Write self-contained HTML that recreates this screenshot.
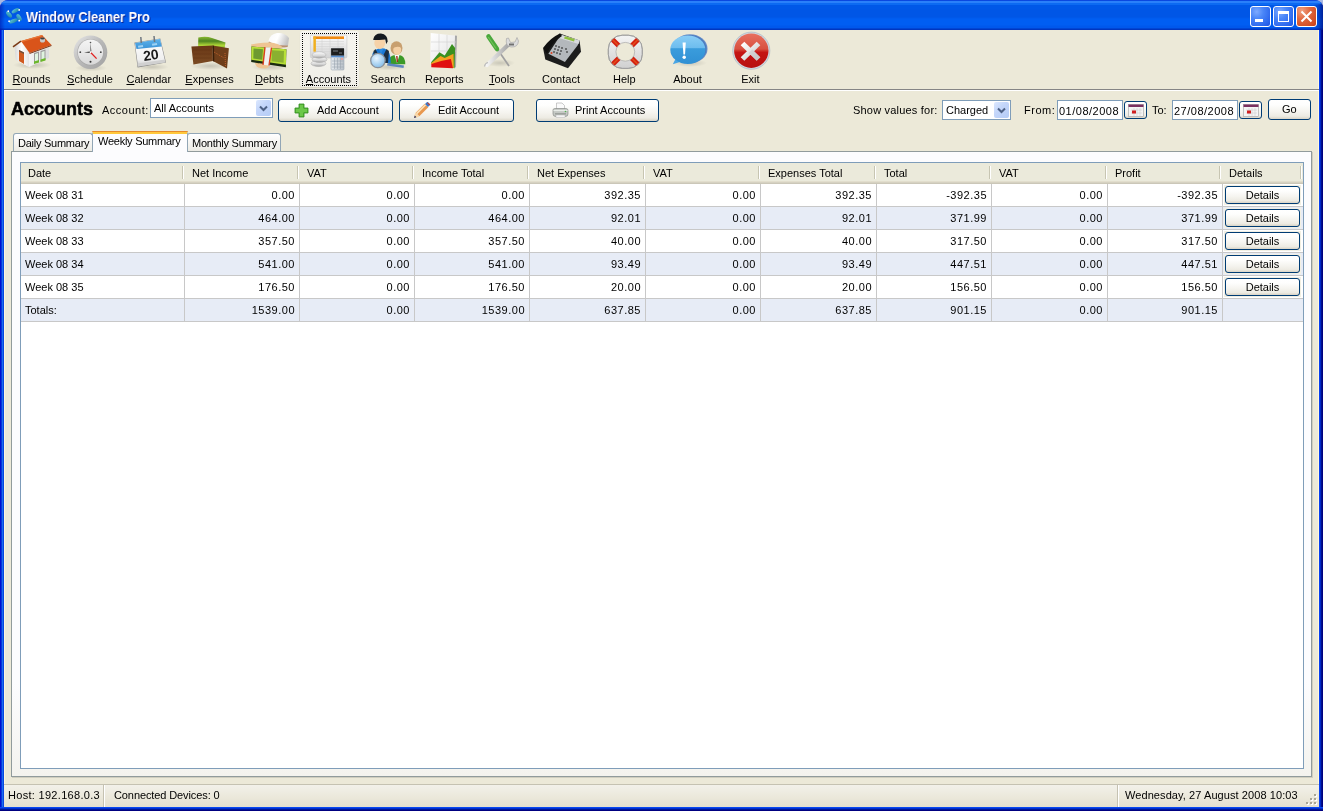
<!DOCTYPE html><html><head><meta charset="utf-8"><style>
*{box-sizing:border-box}
html,body{margin:0;padding:0}
body{width:1323px;height:811px;overflow:hidden;position:relative;background:#A8B8E4;font-family:"Liberation Sans",sans-serif;font-size:11px;color:#000}
.a{position:absolute}
#win{left:0;top:0;width:1323px;height:811px;border-radius:8px 8px 0 0;overflow:hidden;
 background:linear-gradient(to right,#0010D0 0,#0010D0 1px,#0838D8 1px,#0838D8 2px,#1C6CF0 2px,#1C6CF0 3px,#0848E0 3px,#0848E0 1319px,#0840F0 1319px,#0840F0 1320px,#0028C8 1320px,#0028C8 1321px,#00108C 1321px,#00108C 1322px,#000080 1322px)}
#bot{left:0;top:807px;width:1323px;height:4px;background:linear-gradient(to bottom,#0848F0 0,#0848F0 1px,#0030D0 1px,#0030D0 2px,#001898 2px,#001898 3px,#000080 3px,#000080 4px)}
#title{left:0;top:0;width:1323px;height:30px;border-radius:8px 8px 0 0;
 background:linear-gradient(to bottom,#0A48E0 0,#0A48E0 1px,#2A80FA 1px,#2A80FA 3px,#0C6AF2 3px,#0C6AF2 5px,#0058E8 5px,#0058E8 9px,#0056E6 10px,#0056E6 17px,#005EF2 19px,#005EF2 25px,#0058EC 26px,#0058EC 28px,#0046D4 28px,#0046D4 29px,#0036C0 29px,#0036C0 30px)}
#ttext{will-change:transform;left:26px;top:10px;font-size:14px;font-weight:bold;color:#fff;text-shadow:1px 1px 0 #0A1E8C;letter-spacing:0;white-space:nowrap;line-height:15px;transform:scaleX(0.91);transform-origin:0 0}
.tb{top:6px;width:21px;height:21px;border:1px solid #fff;border-radius:3px}
.tbb{background:radial-gradient(ellipse at 30% 25%,#7EAAFF 0,#4A86F8 35%,#2A64EC 80%,#1E52E0 100%)}
#client{left:4px;top:30px;width:1315px;height:777px;background:#ECE9D8;overflow:hidden;will-change:transform;box-shadow:inset 1px 0 0 #FCF6E0,inset -1px 0 0 #FFF8DC,inset 0 -1px 0 #FFF8DC}
.t{white-space:nowrap;line-height:13px}
.tl{top:44px;white-space:nowrap;line-height:13px;text-align:center}
.u{text-decoration:underline;text-underline-offset:1px}
.btn{height:23px;border:1px solid #003C74;border-radius:3px;background:linear-gradient(to bottom,#FFFFFF 0,#FEFEFD 25%,#F5F4EF 60%,#EDEBE3 85%,#D9D4C6 100%)}
.combo{height:20px;border:1px solid #7F9DB9;background:#fff}
.dd{width:15px;height:16px;border-radius:2px;background:linear-gradient(135deg,#DCE8FE 0,#C4D6FA 40%,#B4CCF6 100%)}
.hd{top:133px;height:20px;background:#EBEADB}
</style></head><body>
<div id="win" class="a">
<div id="title" class="a"></div>
<div id="bot" class="a"></div>
<div class="a" style="left:1313px;top:4px;width:10px;height:26px;background:linear-gradient(to right,rgba(0,20,140,0) 0,rgba(0,20,140,0.25) 5px,rgba(0,10,120,0.7) 10px)"></div>
<div class="a" style="left:0;top:4px;width:5px;height:26px;background:linear-gradient(to right,rgba(0,10,160,0.5) 0,rgba(0,20,160,0) 5px)"></div>
<svg class="a" style="left:0;top:0" width="26" height="30" viewBox="0 0 26 30">
<defs><linearGradient id="lg1" x1="0" y1="0" x2="1" y2="1"><stop offset="0" stop-color="#60C8E0"/><stop offset="1" stop-color="#1A7C9C"/></linearGradient></defs>
<ellipse cx="9" cy="14.5" rx="3.8" ry="2" transform="rotate(50 9 14.5)" fill="url(#lg1)"/>
<ellipse cx="15.5" cy="10.7" rx="4.2" ry="1.8" transform="rotate(-28 15.5 10.7)" fill="url(#lg1)"/>
<ellipse cx="19" cy="17.5" rx="3.8" ry="2" transform="rotate(58 19 17.5)" fill="url(#lg1)"/>
<ellipse cx="13.5" cy="21" rx="4.5" ry="1.9" transform="rotate(-22 13.5 21)" fill="url(#lg1)"/>
<circle cx="8.3" cy="11.2" r="0.9" fill="#fff"/><circle cx="19.2" cy="9.9" r="0.9" fill="#fff"/><circle cx="9.1" cy="21.2" r="0.9" fill="#fff"/><circle cx="19.2" cy="20.7" r="0.9" fill="#fff"/>
</svg>
<div id="ttext" class="a">Window Cleaner Pro</div>
<div class="a tb tbb" style="left:1250px"><div class="a" style="left:4px;top:12px;width:8px;height:3px;background:#fff"></div></div>
<div class="a tb tbb" style="left:1273px"><div class="a" style="left:4px;top:4px;width:11px;height:11px;border:1px solid #fff;border-top-width:3px"></div></div>
<div class="a tb" style="left:1296px;background:radial-gradient(ellipse at 25% 20%,#F0A080 0,#E06840 40%,#D04A20 85%,#C03A18 100%)"><svg class="a" style="left:3px;top:3px" width="13" height="13"><path d="M1.5 1.5 L11.5 11.5 M11.5 1.5 L1.5 11.5" stroke="#fff" stroke-width="2"/></svg></div>
</div>
<div id="client" class="a">
<div class="a" style="left:0px;top:59px;width:1315px;height:1px;background:#858585"></div>
<div class="a" style="left:0px;top:60px;width:1315px;height:1px;background:#FFFFFF"></div>
<div class="a" style="left:296px;top:1px;width:59px;height:56px;border-radius:3px;background:linear-gradient(#F6F5F0,#EFEEE8);box-shadow:0 1px 1px rgba(0,0,0,0.08)"></div>
<div class="a" style="left:298px;top:3px;width:55px;height:53px;border:1px dotted #000"></div>
<svg class="a" style="left:6px;top:2px" width="44" height="38" viewBox="0 0 44 38">
<defs>
<linearGradient id="hw1" x1="0" y1="0" x2="1" y2="0"><stop offset="0" stop-color="#D8D8D8"/><stop offset="0.5" stop-color="#FFFFFF"/><stop offset="1" stop-color="#E4E4E4"/></linearGradient>
<linearGradient id="hw2" x1="0" y1="0" x2="1" y2="0"><stop offset="0" stop-color="#F4F4F4"/><stop offset="1" stop-color="#DCDCDC"/></linearGradient>
<radialGradient id="hsh" cx="0.5" cy="0.5" r="0.5"><stop offset="0" stop-color="#000" stop-opacity="0.18"/><stop offset="1" stop-color="#000" stop-opacity="0"/></radialGradient>
</defs>
<ellipse cx="22" cy="33" rx="19" ry="4" fill="url(#hsh)"/>
<polygon points="5,15 11,10 19,21 19,35 6,28" fill="url(#hw1)"/>
<polygon points="19,21 39,14 39,26 19,35" fill="url(#hw2)"/>
<polygon points="4.5,15 11,9.5 19,21 19,35 6,28" fill="url(#hw1)"/>
<path d="M3 14.8 L11 9.2" stroke="#7A3A18" stroke-width="1.6"/>
<polygon points="11,9 32,3 41.5,13 19.5,21" fill="#D9541A"/>
<polygon points="19.5,21 41.5,13 41.5,14 19.5,22" fill="#7A3010"/>
<polygon points="11,9 32,3 33,4 12,10" fill="#E87838"/>
<circle cx="32.5" cy="8" r="2.6" fill="#C8C8C8"/><ellipse cx="32.5" cy="6.4" rx="2.3" ry="1" fill="#404040"/>
<polygon points="9,18 14,20.5 14,32 9,29" fill="#D05A20"/>
<polygon points="9,18 14,20.5 14,22 9,19.5" fill="#6A5040"/>
<polygon points="24,21 29,19.5 29,30 24,31.5" fill="#9A9A9A"/><polygon points="25,22 28,21 28,29 25,30" fill="#E0F4E0"/>
<polygon points="30.5,19 35.5,17.5 35.5,28 30.5,29.5" fill="#9A9A9A"/><polygon points="31.5,20 34.5,19 34.5,27 31.5,28" fill="#E0F4E0"/>
<polygon points="24,29.5 29,28 29,30.5 24,32" fill="#6CB82C"/><polygon points="30.5,27.5 35.5,26 35.5,28.5 30.5,30" fill="#6CB82C"/>
</svg>
<svg class="a" style="left:66px;top:2px" width="42" height="40" viewBox="0 0 42 40">
<defs>
<linearGradient id="cr" x1="0" y1="0" x2="1" y2="1"><stop offset="0" stop-color="#E8E8E8"/><stop offset="0.5" stop-color="#B8B8B8"/><stop offset="1" stop-color="#A0A0A0"/></linearGradient>
<linearGradient id="cf" x1="0" y1="0" x2="0" y2="1"><stop offset="0" stop-color="#F4F4F4"/><stop offset="0.5" stop-color="#E8E8E8"/><stop offset="1" stop-color="#D8D8D8"/></linearGradient>
<radialGradient id="csh" cx="0.5" cy="0.5" r="0.5"><stop offset="0" stop-color="#000" stop-opacity="0.15"/><stop offset="1" stop-color="#000" stop-opacity="0"/></radialGradient>
</defs>
<ellipse cx="21" cy="36" rx="16" ry="3.5" fill="url(#csh)"/>
<circle cx="20.5" cy="20.2" r="16.8" fill="url(#cr)"/>
<circle cx="20.5" cy="20.2" r="13.2" fill="#A8A8A8"/>
<circle cx="20.5" cy="20.2" r="12.6" fill="url(#cf)"/>
<circle cx="20.5" cy="10.5" r="0.8" fill="#555"/><circle cx="20.5" cy="29.8" r="1" fill="#333"/><circle cx="10.3" cy="20.2" r="0.9" fill="#444"/><circle cx="30.8" cy="20.2" r="0.9" fill="#444"/>
<path d="M20.5 20.2 L20.5 10 L21.3 19 Z" fill="#333"/>
<path d="M20.5 19.6 L14 20.2 L20.5 20.9Z" fill="#222"/>
<path d="M20.5 20.2 L26.6 26.6" stroke="#E02020" stroke-width="1.3"/>
<circle cx="20.5" cy="20.2" r="0.9" fill="#fff"/>
</svg>
<svg class="a" style="left:124px;top:2px" width="44" height="40" viewBox="0 0 44 40">
<defs>
<linearGradient id="kb" x1="0" y1="0" x2="0" y2="1"><stop offset="0" stop-color="#FFFFFF"/><stop offset="0.75" stop-color="#EFEFEF"/><stop offset="1" stop-color="#C8C8C8"/></linearGradient>
<linearGradient id="kt" x1="0" y1="0" x2="0" y2="1"><stop offset="0" stop-color="#5EB2EA"/><stop offset="1" stop-color="#3A92D6"/></linearGradient>
<radialGradient id="ksh" cx="0.5" cy="0.5" r="0.5"><stop offset="0" stop-color="#000" stop-opacity="0.15"/><stop offset="1" stop-color="#000" stop-opacity="0"/></radialGradient>
</defs>
<ellipse cx="24" cy="35" rx="17" ry="3.5" fill="url(#ksh)"/>
<polygon points="6.4,10.6 32.3,6.4 38,30.6 9.6,35.5" fill="#8A8A8A"/>
<polygon points="7,11 32,7 37.3,30.2 10,34.6" fill="url(#kb)"/>
<polygon points="7,11 32,7 33.8,14.6 8.5,16.9" fill="url(#kt)"/>
<polygon points="9.5,31.5 37,27.5 37.3,30.2 10,34.6" fill="#D0D0D0"/>
<rect x="10" y="13.5" width="5" height="2" fill="#9ED2F4" transform="rotate(-9 12 14)"/><rect x="24" y="11.5" width="5" height="2" fill="#9ED2F4" transform="rotate(-9 26 12)"/>
<path d="M12.8 5 L13.3 11 M26 4 L26.6 10" stroke="#707880" stroke-width="1.5"/>
<text x="22.8" y="28" font-family="Liberation Sans" font-weight="bold" font-size="14" fill="#1A1A1A" text-anchor="middle" transform="rotate(-8 22 22)">20</text>
</svg>
<svg class="a" style="left:182px;top:2px" width="48" height="40" viewBox="0 0 48 40">
<defs>
<linearGradient id="wg" x1="0" y1="0" x2="0" y2="1"><stop offset="0" stop-color="#88B830"/><stop offset="0.35" stop-color="#4E8420"/><stop offset="0.7" stop-color="#B0D838"/><stop offset="1" stop-color="#7AA828"/></linearGradient>
<linearGradient id="wb" x1="0" y1="0" x2="0" y2="1"><stop offset="0" stop-color="#6A3816"/><stop offset="1" stop-color="#7A4A22"/></linearGradient>
<radialGradient id="wsh" cx="0.5" cy="0.5" r="0.5"><stop offset="0" stop-color="#000" stop-opacity="0.16"/><stop offset="1" stop-color="#000" stop-opacity="0"/></radialGradient>
</defs>
<ellipse cx="24" cy="34" rx="20" ry="4" fill="url(#wsh)"/>
<path d="M12.3 5.5 Q20 4 26 6 L39.5 10.4 L38.5 17 L12.1 15.5 Z" fill="url(#wg)"/>
<polygon points="5.4,14.6 26.6,13.5 26.9,29.1 7.4,32.6" fill="url(#wb)"/>
<path d="M7 18 H25 M7 22 H25 M7 26 H25" stroke="#5A2E10" stroke-width="0.6" opacity="0.6"/>
<polygon points="26.6,13.5 42.9,16.3 41,36.5 26.9,29.1" fill="#6E3E1A"/>
<polygon points="26.6,13.5 28,13.8 28.3,29.8 26.9,29.1" fill="#3A1E08"/>
<path d="M28 20 L38 26 M39 21 L39.5 35" stroke="#D06830" stroke-width="0.8" stroke-dasharray="1 1"/>
</svg>
<svg class="a" style="left:242px;top:0px" width="48" height="42" viewBox="0 0 48 42">
<defs>
<linearGradient id="dc" x1="0" y1="0" x2="1" y2="0.3"><stop offset="0" stop-color="#F8F8F8"/><stop offset="0.5" stop-color="#FFFFFF"/><stop offset="1" stop-color="#C4C4C4"/></linearGradient>
<radialGradient id="dsh" cx="0.5" cy="0.5" r="0.5"><stop offset="0" stop-color="#000" stop-opacity="0.15"/><stop offset="1" stop-color="#000" stop-opacity="0"/></radialGradient>
</defs>
<ellipse cx="24" cy="37" rx="19" ry="4" fill="url(#dsh)"/>
<path d="M22.5 11 Q24 4 31 3 Q39 2.5 43 8 L42 16 Q38 19 30 17 Q24 15 22.5 11Z" fill="url(#dc)"/>
<path d="M23 11.5 Q30 16 42 15.5 L41.5 17 Q30 18.5 22.5 13 Z" fill="#B89070"/>
<path d="M5 14.5 Q12 12.5 24 12.5 Q32 13 37 17.5 L30 20 L6 18.5 Z" fill="#EEC492"/>
<path d="M9 33 Q15 31 23 33 Q24 38.5 18 38.5 Q10 38.5 9 33Z" fill="#EEC492"/>
<polygon points="5.4,16.6 40.4,19.2 39.9,37.3 5.2,32.1" fill="#1A2A10"/>
<polygon points="5.4,16.6 40.4,19.2 39.9,34.8 5.2,29.8" fill="#B8E038"/>
<polygon points="7.5,18.5 17,19.2 16.2,29.8 7.3,28.4" fill="#6E9A30"/>
<polygon points="26,20.2 38,21 37.6,32.8 25.6,31.2" fill="#8AB030"/>
<polygon points="19,17.2 25.5,17.6 23,35.5 17,34.8" fill="#F0F0F0"/>
<path d="M19 17.2 L17 34.8 M25.5 17.6 L23 35.5" stroke="#D84020" stroke-width="1.4"/>
</svg>
<svg class="a" style="left:302px;top:2px" width="46" height="40" viewBox="0 0 46 40">
<defs>
<linearGradient id="ag" x1="0" y1="0" x2="0" y2="1"><stop offset="0" stop-color="#FAFAFA"/><stop offset="1" stop-color="#D4D4D4"/></linearGradient>
<linearGradient id="acn" x1="0" y1="0" x2="0" y2="1"><stop offset="0" stop-color="#FFFFFF"/><stop offset="0.6" stop-color="#D8D8D8"/><stop offset="1" stop-color="#A0A0A0"/></linearGradient>
<linearGradient id="acb" x1="0" y1="0" x2="1" y2="0"><stop offset="0" stop-color="#E8ECF0"/><stop offset="1" stop-color="#B8C0C8"/></linearGradient>
</defs>
<rect x="4.4" y="3" width="36.5" height="23" rx="1.5" fill="url(#ag)" stroke="#C8C8C8" stroke-width="0.6"/>
<rect x="7.4" y="4.4" width="30.6" height="2.6" fill="#F08A10"/>
<rect x="7.4" y="4.4" width="2.5" height="15.3" fill="#F0B020"/>
<path d="M10 9.5 H38 M10 12 H38 M10 14.5 H38 M10 17 H38 M10 19.5 H38 M16 7 V22 M24 7 V22 M32 7 V22" stroke="#D4D4D4" stroke-width="0.6"/>
<ellipse cx="12.5" cy="31.5" rx="7.5" ry="3" fill="url(#acn)" stroke="#A8A8A8" stroke-width="0.5"/>
<ellipse cx="13.5" cy="27.5" rx="7.5" ry="3" fill="url(#acn)" stroke="#A8A8A8" stroke-width="0.5"/>
<ellipse cx="13" cy="23" rx="7" ry="3.2" fill="url(#acn)" stroke="#B0B0B0" stroke-width="0.5"/>
<rect x="25.1" y="16.3" width="12.9" height="21.7" rx="1" fill="url(#acb)" stroke="#909CA8" stroke-width="0.5"/>
<rect x="25.1" y="16.3" width="12.9" height="7.4" fill="#1E1E1E"/>
<path d="M27 19 h5 M33 21 h3" stroke="#9098A0" stroke-width="0.8"/>
<rect x="25.1" y="23.7" width="12.9" height="1.6" fill="#5A90D0"/>
<path d="M28.5 26 V37 M31.5 26 V37 M34.5 26 V37 M26 29 H37.5 M26 32 H37.5 M26 35 H37.5" stroke="#9AA4B0" stroke-width="0.6"/>
<rect x="35" y="26" width="2" height="2" fill="#E8A0A0"/>
</svg>
<svg class="a" style="left:362px;top:0px" width="44" height="42" viewBox="0 0 44 42">
<defs>
<radialGradient id="sl" cx="0.4" cy="0.35" r="0.6"><stop offset="0" stop-color="#EAF6FF"/><stop offset="1" stop-color="#90C4EC"/></radialGradient>
<radialGradient id="ssh" cx="0.5" cy="0.5" r="0.5"><stop offset="0" stop-color="#000" stop-opacity="0.15"/><stop offset="1" stop-color="#000" stop-opacity="0"/></radialGradient>
</defs>
<ellipse cx="24" cy="37" rx="18" ry="3.5" fill="url(#ssh)"/>
<path d="M22.3 34.2 Q22 26 28.5 25 L33.5 25 Q39.3 26 39.3 34.2 Z" fill="#3C9A28"/>
<path d="M28.5 25 L31 33 L33.5 25Z" fill="#F8F8F8"/><path d="M30.8 26 L31.4 32" stroke="#A02818" stroke-width="1.4"/>
<ellipse cx="30.5" cy="18" rx="6" ry="6.8" fill="#C8A070"/>
<ellipse cx="31.2" cy="20" rx="4" ry="4.8" fill="#F4D0A4"/>
<path d="M25 16 Q28 12 35 14 L36 18 Q31 15 26 19Z" fill="#C8A070"/>
<path d="M21.5 33 L38 35.5 L37.5 38 L21 35.5Z" fill="#5E86C0"/>
<path d="M5.2 33.1 Q5 20 12.5 18.6 L18.5 18.6 Q24.8 20 24.8 33.1Z" fill="#1A78D4"/>
<path d="M9.5 19 L15 30 L20.5 19 L23 21 L22 33 L8 33 L7.5 21Z" fill="#1C2228" opacity="0.85"/>
<path d="M12.5 18.6 L15 24 L17.5 18.6Z" fill="#2A8AE0"/>
<ellipse cx="13.8" cy="13" rx="5.5" ry="6" fill="#F6D2A8"/>
<path d="M7.2 9.5 Q8.5 3.4 15 3.6 Q21.7 4.5 21.7 11.5 L20.2 14 L19.3 9.5 Q13 10 7.5 10Z" fill="#151A20"/>
<circle cx="11.9" cy="30.5" r="7.2" fill="url(#sl)" stroke="#8A9098" stroke-width="1.3"/>
</svg>
<svg class="a" style="left:420px;top:0px" width="40" height="42" viewBox="0 0 40 42">
<defs>
<linearGradient id="rp" x1="0" y1="0" x2="1" y2="1"><stop offset="0" stop-color="#FFFFFF"/><stop offset="1" stop-color="#E0E0E0"/></linearGradient>
</defs>
<polygon points="6.7,3.1 32.6,5.7 31.6,37.3 6.2,33.2" fill="url(#rp)"/>
<polygon points="31,5.6 33,5.8 32,37.4 30.2,37.1" fill="#A8A8A8"/>
<path d="M15 4 V33 M23 5 V35 M7 12 H32 M7 21 H32" stroke="#D0D0D0" stroke-width="0.6"/>
<polygon points="7.3,32.1 15.5,22.3 20.7,25.4 28,14 31.1,18.1 30.6,38.3 7,34" fill="#3A9020"/>
<polygon points="7.3,33 16.6,25.9 20.7,28 29.5,23.8 29.8,38 7,34" fill="#F4A020"/>
<polygon points="7.3,34 17.1,31.1 26.9,29 29,38.3 7.3,37.3" fill="#E01010"/>
</svg>
<svg class="a" style="left:476px;top:0px" width="44" height="42" viewBox="0 0 44 42">
<defs>
<linearGradient id="tw" x1="0" y1="0" x2="1" y2="0"><stop offset="0" stop-color="#F4F4F4"/><stop offset="1" stop-color="#A8A8A8"/></linearGradient>
<radialGradient id="tsh" cx="0.5" cy="0.5" r="0.5"><stop offset="0" stop-color="#000" stop-opacity="0.15"/><stop offset="1" stop-color="#000" stop-opacity="0"/></radialGradient>
</defs>
<ellipse cx="20" cy="33" rx="15" ry="4" fill="url(#tsh)"/>
<path d="M18 20 L29 36" stroke="#A0A0A0" stroke-width="1.8"/>
<path d="M8.5 6.5 L17 19" stroke="#4AA83C" stroke-width="4.6" stroke-linecap="round"/>
<path d="M8.2 7 L16 18.5" stroke="#7CC860" stroke-width="1.2" opacity="0.8"/>
<path d="M7 35 L28 15" stroke="url(#tw)" stroke-width="4.2" stroke-linecap="round"/>
<path d="M4.5 36.5 Q5 33 8 32.5" stroke="#B8B8B8" stroke-width="1.2" fill="none"/>
<path d="M26.5 8.5 Q25 16 31 17 Q38 17.5 38.5 11 L37 7.5 L35 12 L30.5 12.5 L28.5 8Z" fill="#DCDCDC" stroke="#A0A0A0" stroke-width="0.6"/>
<rect x="29" y="13.5" width="5" height="2" fill="#707070"/>
</svg>
<svg class="a" style="left:534px;top:0px" width="46" height="42" viewBox="0 0 46 42">
<polygon points="5.2,18.7 21.8,3.6 41.5,10.4 43,21.8 30,38.3 7.3,29.5" fill="#1C1C1C"/>
<polygon points="10.4,23.8 22.8,4.7 41.5,10.4 39.9,15 26.9,32.1" fill="#B4B8BC"/>
<polygon points="22.8,4.7 41.5,10.4 40.5,14 21,8" fill="#D8DADC"/>
<polygon points="26.9,6.2 36.8,9 36,11.4 26,8.6" fill="#90C040"/>
<path d="M5 18 Q12 8 22 3.5 L24 6 Q13 13 9 24 Z" fill="#101010"/>
<path d="M17 16 h2 M20 17 h2 M23 18 h2 M16 19 h2 M19 20 h2 M22 21 h2 M15 22 h2 M18 23 h2 M21 24 h2 M27 19 h2 M28 22 h2" stroke="#222" stroke-width="1.2"/>
<circle cx="13.5" cy="23" r="1" fill="#E04020"/>
</svg>
<svg class="a" style="left:598px;top:0px" width="46" height="42" viewBox="0 0 46 42">
<defs>
<linearGradient id="hb" x1="0" y1="0" x2="0" y2="1"><stop offset="0" stop-color="#F4F4F4"/><stop offset="1" stop-color="#D0D0D0"/></linearGradient>
<mask id="hm"><rect width="46" height="42" fill="#fff"/><circle cx="23.3" cy="21.8" r="9.4" fill="#000"/></mask>
<clipPath id="hc"><rect x="6.3" y="5.2" width="34" height="33.2" rx="14"/></clipPath>
</defs>
<g mask="url(#hm)">
<rect x="6.3" y="5.2" width="34" height="33.2" rx="14" fill="url(#hb)" stroke="#9A9A9A" stroke-width="0.8"/>
<g clip-path="url(#hc)">
<path d="M9 8 L17 16 M37.5 8 L29.5 16 M9 36 L17 28 M37.5 36 L29.5 28" stroke="#D42010" stroke-width="5"/>
<path d="M10.5 9.5 L16 15 M36 9.5 L30.5 15 M10.5 34.5 L16 29 M36 34.5 L30.5 29" stroke="#E86020" stroke-width="1.5" opacity="0.7"/>
</g>
<rect x="6.3" y="5.2" width="34" height="33.2" rx="14" fill="none" stroke="#9A9A9A" stroke-width="0.8"/>
</g>
<circle cx="23.3" cy="21.8" r="9.4" fill="none" stroke="#A8A8A8" stroke-width="0.7"/>
</svg>
<svg class="a" style="left:660px;top:0px" width="48" height="42" viewBox="0 0 48 42">
<defs>
<linearGradient id="ab" x1="0" y1="0" x2="0" y2="1"><stop offset="0" stop-color="#8ACEF6"/><stop offset="0.45" stop-color="#6CBCEE"/><stop offset="0.46" stop-color="#3A9CDC"/><stop offset="1" stop-color="#3090D4"/></linearGradient>
<radialGradient id="ash" cx="0.5" cy="0.5" r="0.5"><stop offset="0" stop-color="#000" stop-opacity="0.15"/><stop offset="1" stop-color="#000" stop-opacity="0"/></radialGradient>
</defs>
<ellipse cx="26" cy="33" rx="17" ry="4" fill="url(#ash)"/>
<ellipse cx="26" cy="18.8" rx="17.5" ry="14.5" fill="#6A90C8"/><ellipse cx="26" cy="18.8" rx="16.5" ry="13.8" fill="#4A7CC0"/>
<path d="M12 28 L8.8 34.2 L19 31Z" fill="#4AA6E4"/>
<ellipse cx="23.8" cy="19.7" rx="17.5" ry="14.3" fill="url(#ab)"/>
<path d="M18.6 12.5 L21.8 12.5 L21 24.5 L19.4 24.5Z" fill="#fff"/><circle cx="20.2" cy="27.2" r="1.7" fill="#fff"/>
</svg>
<svg class="a" style="left:724px;top:0px" width="48" height="42" viewBox="0 0 48 42">
<defs>
<linearGradient id="eg" x1="0" y1="0" x2="0" y2="1"><stop offset="0" stop-color="#E87060"/><stop offset="0.45" stop-color="#D85040"/><stop offset="0.55" stop-color="#C41414"/><stop offset="1" stop-color="#B81010"/></linearGradient>
<linearGradient id="ex" x1="0" y1="0" x2="1" y2="1"><stop offset="0" stop-color="#FFFFFF"/><stop offset="1" stop-color="#C8C8C8"/></linearGradient>
</defs>
<circle cx="23.3" cy="20.7" r="18.6" fill="#D0D8E0" stroke="#A8B4C0" stroke-width="0.6"/>
<circle cx="23.3" cy="20.7" r="17.2" fill="url(#eg)"/>
<path d="M14.5 13.5 L30.5 29 M30.5 13.5 L14.5 29" stroke="url(#ex)" stroke-width="5.2"/><path d="M22.5 21.2 L30.5 29" stroke="#C8C8C8" stroke-width="5.2" opacity="0.5"/>
</svg>
<div class="a tl" style="left:-7.5px;width:70px;top:43px"><span class="u">R</span>ounds</div>
<div class="a tl" style="left:51.0px;width:70px;top:43px"><span class="u">S</span>chedule</div>
<div class="a tl" style="left:109.80000000000001px;width:70px;top:43px"><span class="u">C</span>alendar</div>
<div class="a tl" style="left:170.5px;width:70px;top:43px"><span class="u">E</span>xpenses</div>
<div class="a tl" style="left:230.3px;width:70px;top:43px"><span class="u">D</span>ebts</div>
<div class="a tl" style="left:289.5px;width:70px;top:43px"><span class="u">A</span>ccounts</div>
<div class="a tl" style="left:349.0px;width:70px;top:43px">Search</div>
<div class="a tl" style="left:405.3px;width:70px;top:43px">Reports</div>
<div class="a tl" style="left:462.8px;width:70px;top:43px"><span class="u">T</span>ools</div>
<div class="a tl" style="left:522.0px;width:70px;top:43px">Contact</div>
<div class="a tl" style="left:585.3px;width:70px;top:43px">Help</div>
<div class="a tl" style="left:648.5px;width:70px;top:43px">About</div>
<div class="a tl" style="left:711.3px;width:70px;top:43px">Exit</div>
<div class="a t" style="left:7px;top:69px;font-size:18px;font-weight:bold;line-height:20px;-webkit-text-stroke:0.5px #000">Accounts</div>
<div class="a t" style="left:98px;top:74px;letter-spacing:0.5px">Account:</div>
<div class="a combo" style="left:146px;top:68px;width:123px"><div class="a t" style="left:3px;top:3px">All Accounts</div><div class="a dd" style="left:105px;top:1px"><svg class="a" style="left:3px;top:5px" width="10" height="7"><path d="M1 1.5 L4.5 5 L8 1.5" stroke="#4D6185" stroke-width="2" fill="none"/></svg></div></div>
<div class="a btn" style="left:274px;top:69px;width:115px;height:23px"><svg class="a" style="left:15px;top:3px" width="15" height="15" viewBox="0 0 15 15"><path d="M5 1 H10 V5 H14 V10 H10 V14 H5 V10 H1 V5 H5Z" fill="#5CB83C" stroke="#2E8A1C" stroke-width="0.8"/><path d="M6 2 H9 V6 H13 V9 H9 V13 H6 V9 H2 V6 H6Z" fill="#6CC84A"/></svg><div class="a t" style="left:38px;top:4px">Add Account</div></div>
<div class="a btn" style="left:395px;top:69px;width:115px;height:23px"><svg class="a" style="left:13px;top:2px" width="18" height="17" viewBox="0 0 18 17"><path d="M4.5 12.5 L13.5 3.5" stroke="#E89850" stroke-width="5.2"/><path d="M3.6 11.6 L12.6 2.6" stroke="#FCE2B8" stroke-width="1.6"/><path d="M12.8 2.8 L15.2 0.4 M14.2 4.2 L16.6 1.8" stroke="#3C78C8" stroke-width="2.2"/><path d="M14.6 0.8 L17 3.2" stroke="#D04030" stroke-width="1.2"/><path d="M2.2 10.6 L6.4 14.8 L1 16Z" fill="#F8D8A8"/><path d="M1 16 L1.8 13.6 L3.4 15.2Z" fill="#202050"/></svg><div class="a t" style="left:38px;top:4px">Edit Account</div></div>
<div class="a btn" style="left:532px;top:69px;width:123px;height:23px"><svg class="a" style="left:15px;top:2px" width="17" height="17" viewBox="0 0 17 17"><path d="M4.5 7 L4.5 1 L10 1 L12.5 3.5 L12.5 7Z" fill="#FAFAFA" stroke="#A8A8A8" stroke-width="0.6"/><path d="M1 8 Q1 6.5 3 6.5 H14 Q16 6.5 16 8.5 V12 Q16 14.5 13 14.5 H4 Q1 14.5 1 12Z" fill="#C4C8C4" stroke="#7E827E" stroke-width="0.6"/><path d="M1.5 8.5 H15.5" stroke="#E8ECE8" stroke-width="1.2"/><rect x="3" y="11" width="11" height="1.6" fill="#9EA29E"/><rect x="4" y="13" width="9" height="2.5" fill="#F4F4F4" stroke="#A8A8A8" stroke-width="0.4"/><circle cx="13.5" cy="9.5" r="0.8" fill="#50B050"/></svg><div class="a t" style="left:38px;top:4px">Print Accounts</div></div>
<div class="a t" style="left:849px;top:74px;letter-spacing:0.2px">Show values for:</div>
<div class="a combo" style="left:938px;top:70px;width:69px"><div class="a t" style="left:3px;top:3px">Charged</div><div class="a dd" style="left:51px;top:1px"><svg class="a" style="left:3px;top:5px" width="10" height="7"><path d="M1 1.5 L4.5 5 L8 1.5" stroke="#4D6185" stroke-width="2" fill="none"/></svg></div></div>
<div class="a t" style="left:1020px;top:74px;letter-spacing:0.5px">From:</div>
<div class="a combo" style="left:1053px;top:70px;width:66px"><div class="a t" style="left:1px;top:4px;letter-spacing:0.5px">01/08/2008</div></div>
<div class="a btn" style="left:1120px;top:71px;width:23px;height:18px"><svg class="a" style="left:3px;top:2px" width="16" height="13" viewBox="0 0 16 13"><rect x="0.5" y="0.5" width="15" height="12" fill="#F4F4F4" stroke="#A0A0A0" stroke-width="0.6"/><rect x="0.5" y="0.5" width="15" height="2.5" fill="#7A3060"/><path d="M3 6 H14 M3 9 H14 M6 4 V12 M9 4 V12 M12 4 V12" stroke="#D0D0D0" stroke-width="0.6"/><rect x="4" y="6.5" width="4" height="3" fill="#D02020"/></svg></div>
<div class="a t" style="left:1148px;top:74px">To:</div>
<div class="a combo" style="left:1168px;top:70px;width:66px"><div class="a t" style="left:1px;top:4px;letter-spacing:0.5px">27/08/2008</div></div>
<div class="a btn" style="left:1235px;top:71px;width:23px;height:18px"><svg class="a" style="left:3px;top:2px" width="16" height="13" viewBox="0 0 16 13"><rect x="0.5" y="0.5" width="15" height="12" fill="#F4F4F4" stroke="#A0A0A0" stroke-width="0.6"/><rect x="0.5" y="0.5" width="15" height="2.5" fill="#7A3060"/><path d="M3 6 H14 M3 9 H14 M6 4 V12 M9 4 V12 M12 4 V12" stroke="#D0D0D0" stroke-width="0.6"/><rect x="4" y="6.5" width="4" height="3" fill="#D02020"/></svg></div>
<div class="a btn" style="left:1264px;top:69px;width:43px;height:21px"><div class="a t" style="left:13px;top:3px">Go</div></div>
<div class="a" style="left:7px;top:121px;width:1301px;height:626px;border:1px solid #919B9C;border-right-color:#919B9C;background:linear-gradient(to bottom,#FCFCFE 0,#FCFCFE 85%,#F4F3EE 100%);box-shadow:1px 1px 0 #D0CEBF"></div>
<div class="a" style="left:9px;top:103px;width:80px;height:18px;border:1px solid #92A6B6;border-bottom:none;border-radius:3px 3px 0 0;background:linear-gradient(to bottom,#FFFFFF 0,#F6F5F2 50%,#ECEBE5 100%)"></div>
<div class="a t" style="left:14px;top:107px;letter-spacing:-0.25px">Daily Summary</div>
<div class="a" style="left:183px;top:103px;width:94px;height:18px;border:1px solid #92A6B6;border-bottom:none;border-radius:3px 3px 0 0;background:linear-gradient(to bottom,#FFFFFF 0,#F6F5F2 50%,#ECEBE5 100%)"></div>
<div class="a t" style="left:188px;top:107px;letter-spacing:-0.25px">Monthly Summary</div>
<div class="a" style="left:88px;top:101px;width:96px;height:21px;border:1px solid #92A6B6;border-bottom:none;border-radius:3px 3px 0 0;background:#FCFCFE;border-top:3px solid #FFC83C;box-shadow:inset 0 0 0 0 #000"></div>
<div class="a" style="left:88px;top:101px;width:96px;height:1px;background:#E68B2C;border-radius:3px 3px 0 0"></div>
<div class="a t" style="left:94px;top:105px;letter-spacing:-0.25px">Weekly Summary</div>
<div class="a" style="left:16px;top:132px;width:1284px;height:607px;border:1px solid #7F9DB9;background:#fff"></div>
<div class="a" style="left:17px;top:133px;width:1282px;height:18px;background:#EBEADB"></div>
<div class="a" style="left:17px;top:151px;width:1282px;height:1px;background:#E2DECD"></div>
<div class="a" style="left:17px;top:152px;width:1282px;height:1px;background:#D6D2C2"></div>
<div class="a" style="left:17px;top:153px;width:1282px;height:1px;background:#CBC7B8"></div>
<div class="a" style="left:178px;top:136px;width:1px;height:13px;background:#C7C5B2"></div><div class="a" style="left:179px;top:136px;width:1px;height:13px;background:#FFFFFF"></div>
<div class="a" style="left:293px;top:136px;width:1px;height:13px;background:#C7C5B2"></div><div class="a" style="left:294px;top:136px;width:1px;height:13px;background:#FFFFFF"></div>
<div class="a" style="left:408px;top:136px;width:1px;height:13px;background:#C7C5B2"></div><div class="a" style="left:409px;top:136px;width:1px;height:13px;background:#FFFFFF"></div>
<div class="a" style="left:523px;top:136px;width:1px;height:13px;background:#C7C5B2"></div><div class="a" style="left:524px;top:136px;width:1px;height:13px;background:#FFFFFF"></div>
<div class="a" style="left:639px;top:136px;width:1px;height:13px;background:#C7C5B2"></div><div class="a" style="left:640px;top:136px;width:1px;height:13px;background:#FFFFFF"></div>
<div class="a" style="left:754px;top:136px;width:1px;height:13px;background:#C7C5B2"></div><div class="a" style="left:755px;top:136px;width:1px;height:13px;background:#FFFFFF"></div>
<div class="a" style="left:870px;top:136px;width:1px;height:13px;background:#C7C5B2"></div><div class="a" style="left:871px;top:136px;width:1px;height:13px;background:#FFFFFF"></div>
<div class="a" style="left:985px;top:136px;width:1px;height:13px;background:#C7C5B2"></div><div class="a" style="left:986px;top:136px;width:1px;height:13px;background:#FFFFFF"></div>
<div class="a" style="left:1101px;top:136px;width:1px;height:13px;background:#C7C5B2"></div><div class="a" style="left:1102px;top:136px;width:1px;height:13px;background:#FFFFFF"></div>
<div class="a" style="left:1215px;top:136px;width:1px;height:13px;background:#C7C5B2"></div><div class="a" style="left:1216px;top:136px;width:1px;height:13px;background:#FFFFFF"></div>
<div class="a" style="left:1296px;top:136px;width:1px;height:13px;background:#C7C5B2"></div><div class="a" style="left:1297px;top:136px;width:1px;height:13px;background:#FFFFFF"></div>
<div class="a t" style="left:24px;top:137px">Date</div>
<div class="a t" style="left:188px;top:137px">Net Income</div>
<div class="a t" style="left:303px;top:137px">VAT</div>
<div class="a t" style="left:418px;top:137px">Income Total</div>
<div class="a t" style="left:533px;top:137px">Net Expenses</div>
<div class="a t" style="left:649px;top:137px">VAT</div>
<div class="a t" style="left:764px;top:137px">Expenses Total</div>
<div class="a t" style="left:880px;top:137px">Total</div>
<div class="a t" style="left:995px;top:137px">VAT</div>
<div class="a t" style="left:1111px;top:137px">Profit</div>
<div class="a t" style="left:1225px;top:137px">Details</div>
<div class="a" style="left:17px;top:154px;width:1282px;height:22px;background:#FFFFFF"></div>
<div class="a" style="left:17px;top:177px;width:1282px;height:22px;background:#E7ECF6"></div>
<div class="a" style="left:17px;top:200px;width:1282px;height:22px;background:#FFFFFF"></div>
<div class="a" style="left:17px;top:223px;width:1282px;height:22px;background:#E7ECF6"></div>
<div class="a" style="left:17px;top:246px;width:1282px;height:22px;background:#FFFFFF"></div>
<div class="a" style="left:17px;top:269px;width:1282px;height:22px;background:#E7ECF6"></div>
<div class="a" style="left:17px;top:176px;width:1282px;height:1px;background:#C8C8C8"></div>
<div class="a" style="left:17px;top:199px;width:1282px;height:1px;background:#C8C8C8"></div>
<div class="a" style="left:17px;top:222px;width:1282px;height:1px;background:#C8C8C8"></div>
<div class="a" style="left:17px;top:245px;width:1282px;height:1px;background:#C8C8C8"></div>
<div class="a" style="left:17px;top:268px;width:1282px;height:1px;background:#C8C8C8"></div>
<div class="a" style="left:17px;top:291px;width:1282px;height:1px;background:#C8C8C8"></div>
<div class="a t" style="left:21px;top:159px">Week 08 31</div>
<div class="a t" style="left:91px;top:159px;width:200px;text-align:right;letter-spacing:0.5px">0.00</div>
<div class="a t" style="left:206px;top:159px;width:200px;text-align:right;letter-spacing:0.5px">0.00</div>
<div class="a t" style="left:321px;top:159px;width:200px;text-align:right;letter-spacing:0.5px">0.00</div>
<div class="a t" style="left:437px;top:159px;width:200px;text-align:right;letter-spacing:0.5px">392.35</div>
<div class="a t" style="left:552px;top:159px;width:200px;text-align:right;letter-spacing:0.5px">0.00</div>
<div class="a t" style="left:668px;top:159px;width:200px;text-align:right;letter-spacing:0.5px">392.35</div>
<div class="a t" style="left:783px;top:159px;width:200px;text-align:right;letter-spacing:0.5px">-392.35</div>
<div class="a t" style="left:899px;top:159px;width:200px;text-align:right;letter-spacing:0.5px">0.00</div>
<div class="a t" style="left:1014px;top:159px;width:200px;text-align:right;letter-spacing:0.5px">-392.35</div>
<div class="a" style="left:1220px;top:155px;width:77px;height:20px;background:#F2F0E4"></div>
<div class="a btn" style="left:1221px;top:156px;width:75px;height:18px;border-radius:3px"><div class="a t" style="left:0;width:73px;text-align:center;top:2px">Details</div></div>
<div class="a t" style="left:21px;top:182px">Week 08 32</div>
<div class="a t" style="left:91px;top:182px;width:200px;text-align:right;letter-spacing:0.5px">464.00</div>
<div class="a t" style="left:206px;top:182px;width:200px;text-align:right;letter-spacing:0.5px">0.00</div>
<div class="a t" style="left:321px;top:182px;width:200px;text-align:right;letter-spacing:0.5px">464.00</div>
<div class="a t" style="left:437px;top:182px;width:200px;text-align:right;letter-spacing:0.5px">92.01</div>
<div class="a t" style="left:552px;top:182px;width:200px;text-align:right;letter-spacing:0.5px">0.00</div>
<div class="a t" style="left:668px;top:182px;width:200px;text-align:right;letter-spacing:0.5px">92.01</div>
<div class="a t" style="left:783px;top:182px;width:200px;text-align:right;letter-spacing:0.5px">371.99</div>
<div class="a t" style="left:899px;top:182px;width:200px;text-align:right;letter-spacing:0.5px">0.00</div>
<div class="a t" style="left:1014px;top:182px;width:200px;text-align:right;letter-spacing:0.5px">371.99</div>
<div class="a" style="left:1220px;top:178px;width:77px;height:20px;background:#F2F0E4"></div>
<div class="a btn" style="left:1221px;top:179px;width:75px;height:18px;border-radius:3px"><div class="a t" style="left:0;width:73px;text-align:center;top:2px">Details</div></div>
<div class="a t" style="left:21px;top:205px">Week 08 33</div>
<div class="a t" style="left:91px;top:205px;width:200px;text-align:right;letter-spacing:0.5px">357.50</div>
<div class="a t" style="left:206px;top:205px;width:200px;text-align:right;letter-spacing:0.5px">0.00</div>
<div class="a t" style="left:321px;top:205px;width:200px;text-align:right;letter-spacing:0.5px">357.50</div>
<div class="a t" style="left:437px;top:205px;width:200px;text-align:right;letter-spacing:0.5px">40.00</div>
<div class="a t" style="left:552px;top:205px;width:200px;text-align:right;letter-spacing:0.5px">0.00</div>
<div class="a t" style="left:668px;top:205px;width:200px;text-align:right;letter-spacing:0.5px">40.00</div>
<div class="a t" style="left:783px;top:205px;width:200px;text-align:right;letter-spacing:0.5px">317.50</div>
<div class="a t" style="left:899px;top:205px;width:200px;text-align:right;letter-spacing:0.5px">0.00</div>
<div class="a t" style="left:1014px;top:205px;width:200px;text-align:right;letter-spacing:0.5px">317.50</div>
<div class="a" style="left:1220px;top:201px;width:77px;height:20px;background:#F2F0E4"></div>
<div class="a btn" style="left:1221px;top:202px;width:75px;height:18px;border-radius:3px"><div class="a t" style="left:0;width:73px;text-align:center;top:2px">Details</div></div>
<div class="a t" style="left:21px;top:228px">Week 08 34</div>
<div class="a t" style="left:91px;top:228px;width:200px;text-align:right;letter-spacing:0.5px">541.00</div>
<div class="a t" style="left:206px;top:228px;width:200px;text-align:right;letter-spacing:0.5px">0.00</div>
<div class="a t" style="left:321px;top:228px;width:200px;text-align:right;letter-spacing:0.5px">541.00</div>
<div class="a t" style="left:437px;top:228px;width:200px;text-align:right;letter-spacing:0.5px">93.49</div>
<div class="a t" style="left:552px;top:228px;width:200px;text-align:right;letter-spacing:0.5px">0.00</div>
<div class="a t" style="left:668px;top:228px;width:200px;text-align:right;letter-spacing:0.5px">93.49</div>
<div class="a t" style="left:783px;top:228px;width:200px;text-align:right;letter-spacing:0.5px">447.51</div>
<div class="a t" style="left:899px;top:228px;width:200px;text-align:right;letter-spacing:0.5px">0.00</div>
<div class="a t" style="left:1014px;top:228px;width:200px;text-align:right;letter-spacing:0.5px">447.51</div>
<div class="a" style="left:1220px;top:224px;width:77px;height:20px;background:#F2F0E4"></div>
<div class="a btn" style="left:1221px;top:225px;width:75px;height:18px;border-radius:3px"><div class="a t" style="left:0;width:73px;text-align:center;top:2px">Details</div></div>
<div class="a t" style="left:21px;top:251px">Week 08 35</div>
<div class="a t" style="left:91px;top:251px;width:200px;text-align:right;letter-spacing:0.5px">176.50</div>
<div class="a t" style="left:206px;top:251px;width:200px;text-align:right;letter-spacing:0.5px">0.00</div>
<div class="a t" style="left:321px;top:251px;width:200px;text-align:right;letter-spacing:0.5px">176.50</div>
<div class="a t" style="left:437px;top:251px;width:200px;text-align:right;letter-spacing:0.5px">20.00</div>
<div class="a t" style="left:552px;top:251px;width:200px;text-align:right;letter-spacing:0.5px">0.00</div>
<div class="a t" style="left:668px;top:251px;width:200px;text-align:right;letter-spacing:0.5px">20.00</div>
<div class="a t" style="left:783px;top:251px;width:200px;text-align:right;letter-spacing:0.5px">156.50</div>
<div class="a t" style="left:899px;top:251px;width:200px;text-align:right;letter-spacing:0.5px">0.00</div>
<div class="a t" style="left:1014px;top:251px;width:200px;text-align:right;letter-spacing:0.5px">156.50</div>
<div class="a" style="left:1220px;top:247px;width:77px;height:20px;background:#F2F0E4"></div>
<div class="a btn" style="left:1221px;top:248px;width:75px;height:18px;border-radius:3px"><div class="a t" style="left:0;width:73px;text-align:center;top:2px">Details</div></div>
<div class="a t" style="left:21px;top:274px">Totals:</div>
<div class="a t" style="left:91px;top:274px;width:200px;text-align:right;letter-spacing:0.5px">1539.00</div>
<div class="a t" style="left:206px;top:274px;width:200px;text-align:right;letter-spacing:0.5px">0.00</div>
<div class="a t" style="left:321px;top:274px;width:200px;text-align:right;letter-spacing:0.5px">1539.00</div>
<div class="a t" style="left:437px;top:274px;width:200px;text-align:right;letter-spacing:0.5px">637.85</div>
<div class="a t" style="left:552px;top:274px;width:200px;text-align:right;letter-spacing:0.5px">0.00</div>
<div class="a t" style="left:668px;top:274px;width:200px;text-align:right;letter-spacing:0.5px">637.85</div>
<div class="a t" style="left:783px;top:274px;width:200px;text-align:right;letter-spacing:0.5px">901.15</div>
<div class="a t" style="left:899px;top:274px;width:200px;text-align:right;letter-spacing:0.5px">0.00</div>
<div class="a t" style="left:1014px;top:274px;width:200px;text-align:right;letter-spacing:0.5px">901.15</div>
<div class="a" style="left:180px;top:154px;width:1px;height:137px;background:#C8C8C8"></div>
<div class="a" style="left:295px;top:154px;width:1px;height:137px;background:#C8C8C8"></div>
<div class="a" style="left:410px;top:154px;width:1px;height:137px;background:#C8C8C8"></div>
<div class="a" style="left:525px;top:154px;width:1px;height:137px;background:#C8C8C8"></div>
<div class="a" style="left:641px;top:154px;width:1px;height:137px;background:#C8C8C8"></div>
<div class="a" style="left:756px;top:154px;width:1px;height:137px;background:#C8C8C8"></div>
<div class="a" style="left:872px;top:154px;width:1px;height:137px;background:#C8C8C8"></div>
<div class="a" style="left:987px;top:154px;width:1px;height:137px;background:#C8C8C8"></div>
<div class="a" style="left:1103px;top:154px;width:1px;height:137px;background:#C8C8C8"></div>
<div class="a" style="left:1218px;top:154px;width:1px;height:137px;background:#C8C8C8"></div>
<div class="a" style="left:0px;top:754px;width:1315px;height:1px;background:#C5C2B2"></div>
<div class="a" style="left:0px;top:755px;width:1315px;height:22px;background:linear-gradient(to bottom,#F2F1EA 0,#ECE9DC 50%,#E3E0D0 100%)"></div>
<div class="a" style="left:99px;top:755px;width:1px;height:22px;background:#C5C2B2"></div><div class="a" style="left:100px;top:755px;width:1px;height:22px;background:#FFFFFF"></div>
<div class="a" style="left:1113px;top:755px;width:1px;height:22px;background:#C5C2B2"></div><div class="a" style="left:1114px;top:755px;width:1px;height:22px;background:#FFFFFF"></div>
<div class="a t" style="left:4px;top:759px;letter-spacing:0.3px">Host: 192.168.0.3</div>
<div class="a t" style="left:110px;top:759px;letter-spacing:-0.1px">Connected Devices: 0</div>
<div class="a t" style="left:1121px;top:759px;letter-spacing:0.08px">Wednesday, 27 August 2008 10:03</div>
<svg class="a" style="left:1299px;top:764px" width="15" height="12"><rect x="12" y="1" width="2" height="2" fill="#fff"/><rect x="11" y="0" width="2" height="2" fill="#A8A494"/><rect x="12" y="5" width="2" height="2" fill="#fff"/><rect x="11" y="4" width="2" height="2" fill="#A8A494"/><rect x="8" y="5" width="2" height="2" fill="#fff"/><rect x="7" y="4" width="2" height="2" fill="#A8A494"/><rect x="12" y="9" width="2" height="2" fill="#fff"/><rect x="11" y="8" width="2" height="2" fill="#A8A494"/><rect x="8" y="9" width="2" height="2" fill="#fff"/><rect x="7" y="8" width="2" height="2" fill="#A8A494"/><rect x="4" y="9" width="2" height="2" fill="#fff"/><rect x="3" y="8" width="2" height="2" fill="#A8A494"/></svg>
</div>
</body></html>
